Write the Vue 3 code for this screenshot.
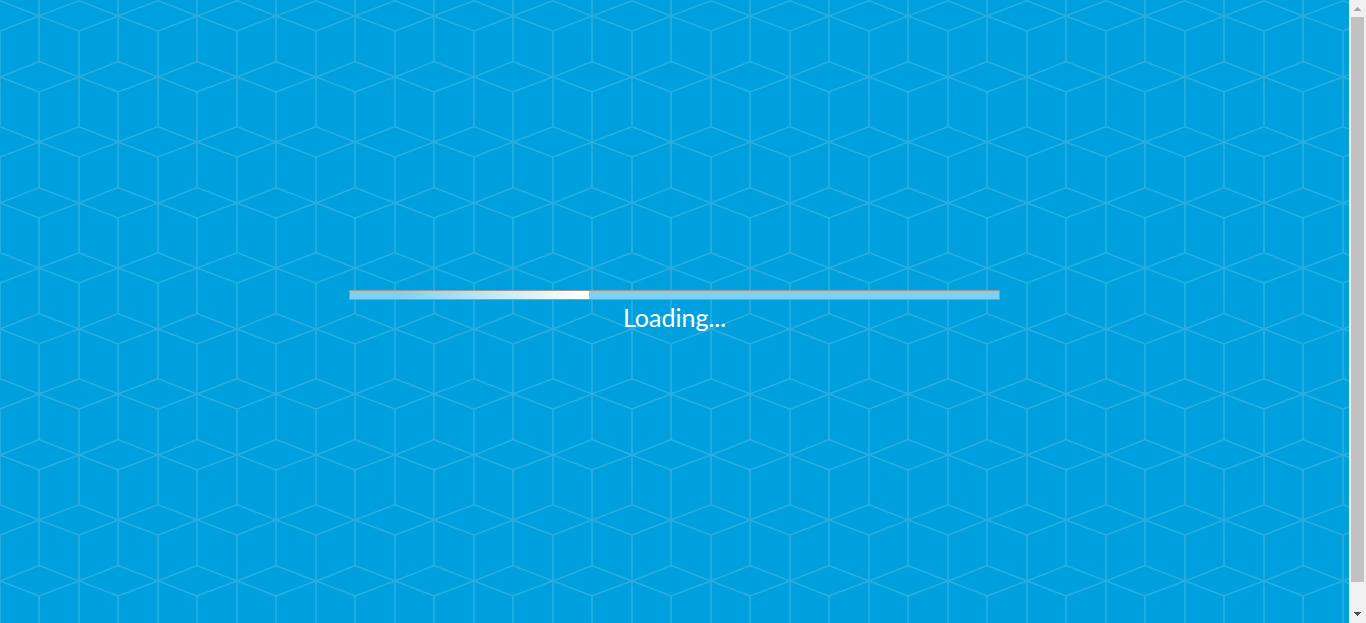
<script setup>
import { ref } from 'vue'

const progress = ref(36.8)
</script>

<template>
  <div class="screen">
    <main class="stage">
      <svg class="backdrop" aria-hidden="true">
        <defs>
          <pattern id="cubes" width="79" height="126" patternUnits="userSpaceOnUse">
            <g class="lines">
              <path d="M0 .8L39 16L79 .8M0 31L39 16L79 31" />
              <path d="M0 77L39 61.5L79 77L39 92Z" />
              <path d="M0 126.8L39 142L79 126.8" />
              <path d="M39 0V61.5M39 92V126M0 31V126M79 31V126" />
              <path d="M0 0V.8M79 0V.8" />
            </g>
          </pattern>
        </defs>
        <rect width="100%" height="100%" fill="url(#cubes)" />
      </svg>
      <div class="loader">
        <progress id="load" class="bar" :value="progress" max="100"></progress>
        <label for="load" class="caption">Loading...</label>
      </div>
    </main>
    <div class="scrollbar" aria-hidden="true">
      <svg class="arrow" viewBox="0 0 17 17"><path fill="#a3a3a3" d="M8 7h1v1h1v1h1v1h1v1H5v-1h1V9h1V8h1z" /></svg>
      <div class="track"><div class="thumb"></div></div>
      <svg class="arrow" viewBox="0 0 17 17"><path fill="#505050" d="M5 6h7v1h-1v1h-1v1H9v1H8V9H7V8H6V7H5z" /></svg>
    </div>
  </div>
</template>

<style>
body {
  margin: 0;
}
</style>

<style scoped>
.screen {
  display: flex;
  height: 100vh;
  overflow: hidden;
}
.stage {
  position: relative;
  flex: 1;
  display: flex;
  align-items: center;
  justify-content: center;
  background: #009fdd;
}
.backdrop {
  position: absolute;
  inset: 0;
  width: 100%;
  height: 100%;
}
.lines {
  fill: none;
  stroke: #2aafe3;
  stroke-width: 1.5;
}
.loader {
  position: relative;
  display: flex;
  flex-direction: column;
  align-items: center;
  width: 651px;
  max-width: 90%;
}
.bar {
  display: block;
  appearance: none;
  box-sizing: border-box;
  width: 100%;
  height: 10px;
  border: 1px solid #999;
  background: #80cfec;
}
.bar::-webkit-progress-bar {
  background: #80cfec;
}
.bar::-webkit-progress-value {
  background: linear-gradient(to right, #80cfec 20%, #fff 98%);
}
.caption {
  font: 25px/34px Lato, "Noto Sans", sans-serif;
  color: #fff;
}
.scrollbar {
  display: flex;
  flex-direction: column;
  width: 17px;
  background: #f0f0f0;
}
.arrow {
  display: block;
  width: 17px;
  height: 17px;
}
.track {
  flex: 1;
  padding: 0 2px;
}
.thumb {
  height: 96%;
  background: #c1c1c1;
}
</style>
